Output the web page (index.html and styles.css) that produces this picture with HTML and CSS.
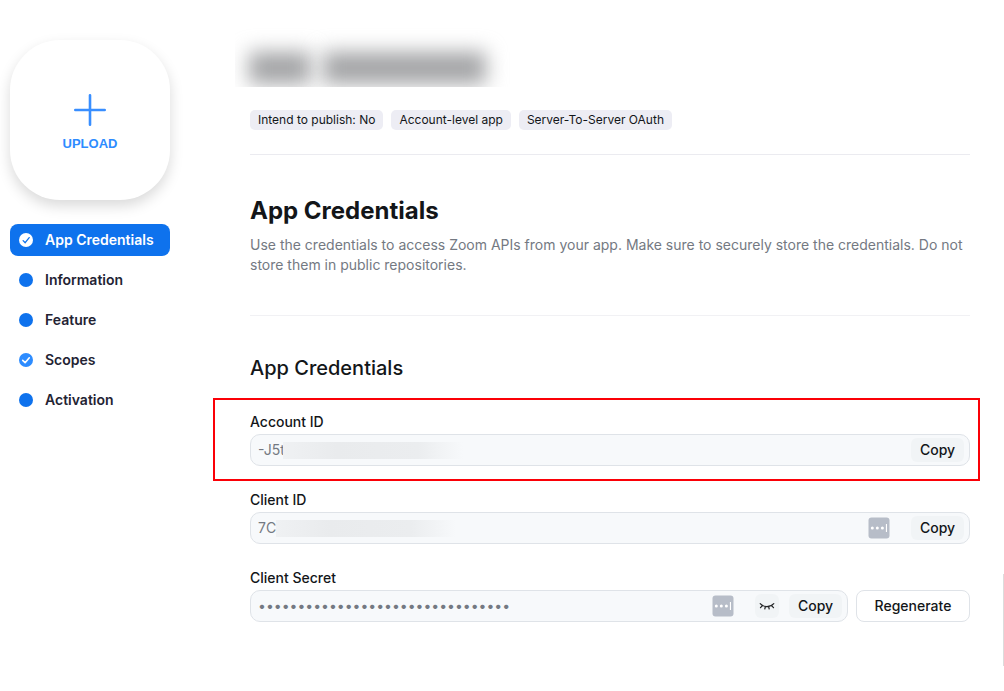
FILE: index.html
```
<!DOCTYPE html>
<html lang="en">
<head>
<meta charset="utf-8">
<meta name="viewport" content="width=device-width, initial-scale=1">
<title>App Credentials</title>
<link rel="stylesheet" href="styles.css">
</head>
<body>
<div class="page">
  <aside class="sidebar">
    <button class="upload" type="button">
      <svg class="upload-icon" viewBox="0 0 32 32" aria-hidden="true"><path d="M16 1.3v29.4M1.3 16h29.4"/></svg>
      <span>UPLOAD</span>
    </button>
    <nav class="steps">
      <a class="step step-active" href="#credentials">
        <svg class="step-icon" viewBox="0 0 14 14" aria-hidden="true"><circle class="disc-white" cx="7" cy="7" r="7"/><path class="tick-blue" d="M4.1 7.6l2.1 2.1 4-5.1"/></svg>
        App Credentials
      </a>
      <a class="step" href="#information">
        <svg class="step-icon" viewBox="0 0 14 14" aria-hidden="true"><circle class="disc" cx="7" cy="7" r="7"/></svg>
        Information
      </a>
      <a class="step" href="#feature">
        <svg class="step-icon" viewBox="0 0 14 14" aria-hidden="true"><circle class="disc" cx="7" cy="7" r="7"/></svg>
        Feature
      </a>
      <a class="step" href="#scopes">
        <svg class="step-icon" viewBox="0 0 14 14" aria-hidden="true"><circle class="disc-light" cx="7" cy="7" r="7"/><path class="tick-white" d="M3.7 7.4l2.4 2.3 4.2-4.9"/></svg>
        Scopes
      </a>
      <a class="step" href="#activation">
        <svg class="step-icon" viewBox="0 0 14 14" aria-hidden="true"><circle class="disc" cx="7" cy="7" r="7"/></svg>
        Activation
      </a>
    </nav>
  </aside>

  <main class="content">
    <header class="app-header">
      <div class="redacted-title" aria-hidden="true"><i class="smear smear-short"></i><i class="smear smear-long"></i></div>
      <div class="tags">
        <span class="tag">Intend to publish: No</span>
        <span class="tag">Account-level app</span>
        <span class="tag">Server-To-Server OAuth</span>
      </div>
    </header>

    <section class="intro">
      <h1>App Credentials</h1>
      <p>Use the credentials to access Zoom APIs from your app. Make sure to securely store the credentials. Do not store them in public repositories.</p>
    </section>

    <section class="credentials" id="credentials">
      <h2>App Credentials</h2>

      <div class="field">
        <label for="account-id">Account ID</label>
        <div class="row">
          <div class="box">
            <div class="value value-account">
              <input id="account-id" type="text" value="-J5t" readonly>
              <span class="redacted"></span>
            </div>
            <button class="chip" type="button">Copy</button>
          </div>
        </div>
        <div class="highlight"></div>
      </div>

      <div class="field">
        <label for="client-id">Client ID</label>
        <div class="row">
          <div class="box">
            <div class="value value-client">
              <input id="client-id" type="text" value="7C" readonly>
              <span class="redacted"></span>
            </div>
            <button class="manager" type="button" aria-label="Fill from password manager">
              <svg viewBox="0 0 22 22" aria-hidden="true"><rect class="manager-back" x="0.5" y="0.5" width="21" height="21" rx="3"/><circle cx="4.3" cy="11" r="1.5"/><circle cx="9.3" cy="11" r="1.5"/><circle cx="14.4" cy="11" r="1.5"/><rect x="17.9" y="7" width="1.1" height="8"/></svg>
            </button>
            <button class="chip" type="button">Copy</button>
          </div>
        </div>
      </div>

      <div class="field">
        <label for="client-secret">Client Secret</label>
        <div class="row">
          <div class="box">
            <div class="value">
              <input id="client-secret" type="password" value="00000000000000000000000000000000" readonly>
            </div>
            <button class="manager" type="button" aria-label="Fill from password manager">
              <svg viewBox="0 0 22 22" aria-hidden="true"><rect class="manager-back" x="0.5" y="0.5" width="21" height="21" rx="3"/><circle cx="4.3" cy="11" r="1.5"/><circle cx="9.3" cy="11" r="1.5"/><circle cx="14.4" cy="11" r="1.5"/><rect x="17.9" y="7" width="1.1" height="8"/></svg>
            </button>
            <button class="chip chip-icon" type="button" aria-label="Show secret">
              <svg viewBox="0 0 16 16" aria-hidden="true"><path d="M1.2 5.6C4.8 9.5 11.2 9.5 14.8 5.6M3.6 7.5L1.5 9.7M6.4 8.5L5.8 11M9.6 8.5l.6 2.5M12.4 7.5l2.1 2.2"/></svg>
            </button>
            <button class="chip" type="button">Copy</button>
          </div>
          <button class="regenerate" type="button">Regenerate</button>
        </div>
      </div>
    </section>
  </main>
  <div class="edge-tab"></div>
</div>
</body>
</html>
```
FILE: styles.css
```
* {
  box-sizing: border-box;
}

body {
  margin: 0;
  background: #fff;
  color: #131619;
  font-family: Inter, "Liberation Sans", sans-serif;
  font-size: 14px;
  line-height: 20px;
}

button,
input {
  margin: 0;
  padding: 0;
  border: 0;
  font: inherit;
  color: inherit;
}

.page {
  position: relative;
  display: flex;
  gap: 80px;
  min-height: 100vh;
  padding: 28px 34px 24px 10px;
}

/* Sidebar */

.sidebar {
  flex: none;
  width: 160px;
  padding-top: 12px;
}

.upload {
  display: flex;
  flex-direction: column;
  align-items: center;
  justify-content: center;
  gap: 8px;
  width: 100%;
  height: 160px;
  padding-top: 8px;
  border-radius: 50px;
  background: #fff;
  box-shadow: 0 6px 14px rgba(0, 0, 0, 0.15);
  color: #2d8cff;
  font-family: "Liberation Sans", sans-serif;
  font-size: 13px;
  font-weight: 700;
}

.upload-icon {
  width: 32px;
  height: 32px;
  fill: none;
  stroke: #388eff;
  stroke-width: 2.6;
  stroke-linecap: round;
}

.steps {
  display: flex;
  flex-direction: column;
  gap: 8px;
  margin-top: 24px;
}

.step {
  display: flex;
  align-items: center;
  gap: 12px;
  height: 32px;
  padding: 0 9px;
  border-radius: 8px;
  color: #232333;
  font-weight: 600;
  text-decoration: none;
}

.step-active {
  background: #0e72ed;
  color: #fff;
}

.step-icon {
  flex: none;
  width: 14px;
  height: 14px;
  fill: none;
}

.disc { fill: #0e72ed; }
.disc-light { fill: #2d8cff; }
.disc-white { fill: #fff; }

.tick-blue,
.tick-white {
  stroke: #0e72ed;
  stroke-width: 1.3;
  stroke-linecap: round;
  stroke-linejoin: round;
}

.tick-white {
  stroke: #fff;
  stroke-width: 1.6;
}

/* Header */

.content {
  flex: 1;
  min-width: 0;
}

.app-header {
  padding-bottom: 24px;
  border-bottom: 1px solid #ebebf0;
}

.redacted-title {
  display: flex;
  align-items: center;
  gap: 12px;
  width: 277px;
  height: 59px;
  margin-left: -15px;
  padding: 20px 26px 0 14px;
  overflow: hidden;
}

.smear {
  height: 32px;
  background: #a3a4a6;
  filter: blur(10px);
}

.smear-short { width: 62px; }
.smear-long { flex: 1; }

.tags {
  display: flex;
  flex-wrap: wrap;
  gap: 8px;
  margin-top: 23px;
}

.tag {
  padding: 0 8px;
  border-radius: 5px;
  background: #ededf4;
  font-size: 12px;
}

/* Intro */

.intro {
  padding: 40px 0;
  border-bottom: 1px solid #f1f1f4;
}

h1,
h2,
p {
  margin: 0;
}

h1 {
  font-size: 24px;
  font-weight: 700;
  line-height: 32px;
}

.intro p {
  margin-top: 8px;
  color: #747982;
}

/* Credentials */

.credentials {
  display: flex;
  flex-direction: column;
  gap: 24px;
  padding-top: 40px;
}

h2 {
  margin-bottom: 8px;
  font-size: 20px;
  font-weight: 500;
  line-height: 24px;
}

.field {
  position: relative;
  display: flex;
  flex-direction: column;
  gap: 2px;
}

.field label {
  font-weight: 500;
}

.row {
  display: flex;
  gap: 8px;
}

.box {
  flex: 1;
  display: flex;
  align-items: center;
  gap: 10px;
  min-width: 0;
  height: 32px;
  padding: 0 5px 0 7px;
  border: 1px solid #dfe3e8;
  border-radius: 10px;
  background: #f7f9fb;
}

.value {
  position: relative;
  flex: 1;
  min-width: 0;
}

.value input {
  display: block;
  width: 100%;
  height: 20px;
  outline: 0;
  background: transparent;
  color: #747982;
}

.redacted {
  position: absolute;
  top: 2px;
  left: 25px;
  width: 180px;
  height: 17px;
  background: linear-gradient(90deg, #eff1f3, #e9ebed 30%, #ebedef 75%, #f7f9fb);
}

.value-client .redacted {
  left: 18px;
}

.chip {
  width: 53px;
  height: 24px;
  border-radius: 6px;
  background: #f1f4f6;
  font-weight: 500;
}

.chip-icon {
  display: grid;
  place-items: center;
  width: 24px;
}

.chip-icon svg {
  width: 16px;
  height: 16px;
  fill: none;
  stroke: #222325;
  stroke-width: 1.2;
  stroke-linecap: round;
}

.manager {
  width: 22px;
  height: 22px;
  margin-right: 11px;
  background: transparent;
}

.manager svg {
  display: block;
  fill: #fff;
}

.manager-back {
  fill: #b7bdc8;
}

.regenerate {
  min-width: 114px;
  height: 32px;
  padding: 0 15px;
  border: 1px solid #dfe3e8;
  border-radius: 8px;
  background: #fff;
  font-weight: 500;
}

/* Marker frame around the account field */
.highlight {
  position: absolute;
  inset: -14px -10px -15px -37px;
  border: 2px solid #fb0007;
  pointer-events: none;
}

.edge-tab {
  position: absolute;
  top: 574px;
  right: 0;
  width: 1px;
  height: 92px;
  background: #dcdcdc;
}
```
